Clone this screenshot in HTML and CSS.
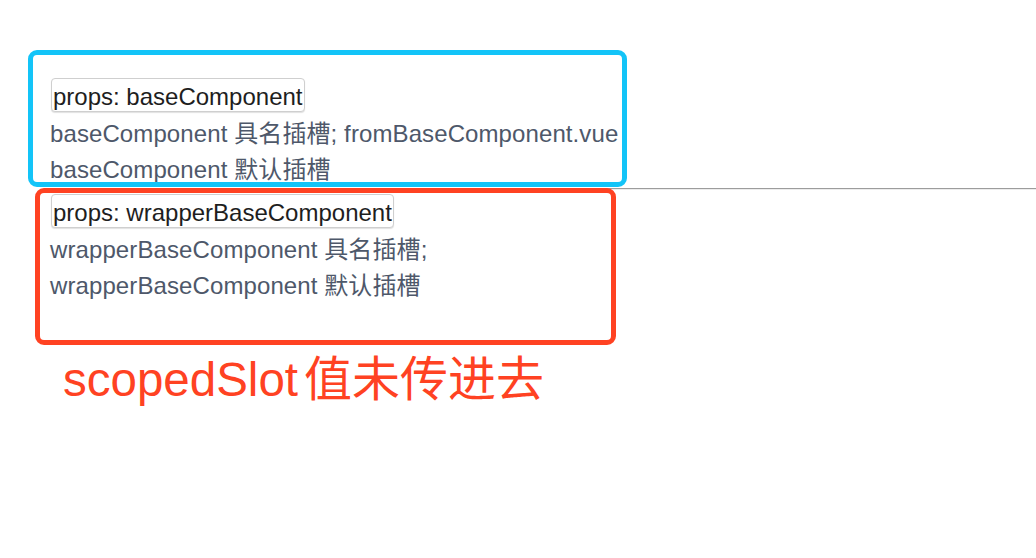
FILE: index.html
```html
<!DOCTYPE html>
<html lang="zh">
<head>
<meta charset="utf-8">
<title>scopedSlot</title>
<link rel="stylesheet" href="styles.css">
</head>
<body>
<div class="page">
  <section class="comp">
    <div class="btn-row"><span class="props">props: baseComponent</span></div>
    <div class="line">baseComponent 具名插槽; fromBaseComponent.vue</div>
    <div class="line">baseComponent 默认插槽</div>
  </section>
  <hr class="sep">
  <section class="comp">
    <div class="btn-row"><span class="props">props: wrapperBaseComponent</span></div>
    <div class="line">wrapperBaseComponent 具名插槽;</div>
    <div class="line">wrapperBaseComponent 默认插槽</div>
  </section>
  <p class="note">scopedSlot<span class="note-cjk">值未传进去</span></p>
  <div class="mark mark-blue"></div>
  <div class="mark mark-red"></div>
</div>
</body>
</html>
```
FILE: styles.css
```css
html, body {
  margin: 0;
  padding: 0;
  background: #ffffff;
}

body {
  font-family: "Liberation Sans", "Noto Sans CJK SC", sans-serif;
}

.page {
  position: relative;
  width: 1036px;
  height: 558px;
  padding: 78px 0 0 50px;
  box-sizing: border-box;
  overflow: hidden;
}

.comp {
  display: flex;
  flex-direction: column;
}

.btn-row {
  display: flex;
  height: 34px;
}

.props {
  display: block;
  box-sizing: border-box;
  height: 34px;
  margin-left: 1px;
  padding: 2px 1px 0 1px;
  border: 1px solid #cfcfcf;
  border-radius: 4px;
  box-shadow: 0 1px 1px rgba(0, 0, 0, 0.12);
  background: #fff;
  color: #1e1e1e;
  font-size: 24px;
  line-height: 32px;
  white-space: nowrap;
}

.line {
  height: 36px;
  line-height: 36px;
  font-size: 24px;
  color: #4e586a;
  white-space: nowrap;
  overflow: visible;
  letter-spacing: 0.1px;
}

.btn-row + .line {
  margin-top: 4px;
}

.sep {
  margin: 0 0 4px 0;
  height: 0;
  border: 0;
  border-top: 1px solid #9c9c9c;
  border-bottom: 1px solid #ececec;
}

.note {
  margin: 52px 0 0 13px;
  font-size: 47.5px;
  line-height: 47px;
  height: 47px;
  color: #ff4222;
  white-space: nowrap;
}

.note-cjk {
  margin-left: 6px;
  font-size: 48px;
}

.mark {
  position: absolute;
  box-sizing: border-box;
  border-style: solid;
  border-radius: 9px;
  pointer-events: none;
}

.mark-blue {
  left: 28px;
  top: 50px;
  width: 599px;
  height: 137px;
  border-width: 5px;
  border-color: #13c4f8;
}

.mark-red {
  left: 35px;
  top: 188px;
  width: 581px;
  height: 157px;
  border-width: 5px;
  border-color: #ff4222;
}
```
